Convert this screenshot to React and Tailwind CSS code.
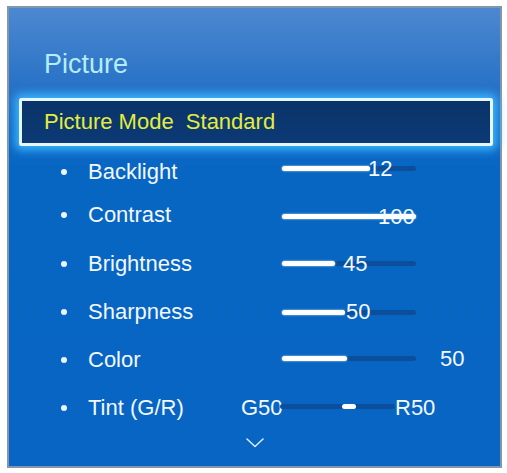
import React from 'react'

const TRACK_W = 134

// rows of the picture menu; fill/value in px from the track start
const rows = [
  { label: 'Backlight',  h: 'h-[36px]', shift: 'mb-[7px]', fill: 88,  value: '12',  valueX: 86 },
  { label: 'Contrast',   h: 'h-[49px]', shift: 'mt-[4px]', fill: 134, value: '100', valueX: 96 },
  { label: 'Brightness', h: 'h-[49px]', shift: '',         fill: 53,  value: '45',  valueX: 61 },
  { label: 'Sharpness',  h: 'h-[48px]', shift: '',         fill: 63,  value: '50',  valueX: 64 },
  { label: 'Color',      h: 'h-[48px]', shift: 'mb-[3px]', fill: 65,  value: '50',  valueX: 158 },
]

function Bullet() {
  return <span className="w-[6px] h-[6px] rounded-full bg-[#eef6ff] shrink-0" />
}

function Slider({ fill, value, valueX, shift }) {
  return (
    <div className={`relative h-[5px] rounded-full bg-[#0b4f9c] ${shift}`} style={{ width: TRACK_W }}>
      <div
        className="absolute left-0 top-0 h-full rounded-full bg-white shadow-[0_0_2px_#d8f2ff]"
        style={{ width: fill }}
      />
      <span
        className="absolute top-1/2 -translate-y-1/2 leading-none text-[22px] text-[#f4faff]"
        style={{ left: valueX }}
      >
        {value}
      </span>
    </div>
  )
}

export default function App() {
  return (
    <div
      className="w-[507px] h-[473px] bg-white pt-[6px] pl-[7px]"
      style={{ fontFamily: '"Liberation Sans", Arial, sans-serif' }}
    >
      <div className="w-[495px] h-[462px] border-2 border-[#8496ae] bg-[linear-gradient(180deg,#4c88d0_0px,#3a7dcb_40px,#2570c6_85px,#1268c4_120px,#0866c3_160px,#0865c3_100%)] flex flex-col">

        {/* título */}
        <div className="pt-[41px] pl-[35px] text-[27px] leading-[30px] text-[#b4ecf8]">
          Picture
        </div>

        {/* elemento seleccionado */}
        <div className="mt-[19px] ml-[10px] w-[474px] h-[48px] border-[3px] border-[#e6f7ff] rounded-[2px] bg-[linear-gradient(180deg,#0a3468,#0c3a76)] shadow-[0_0_10px_4px_#3ab8ff] pl-[22px] flex items-center">
          <span className="text-[22px] leading-[42px] text-[#e4ec3e] whitespace-pre">Picture Mode  Standard</span>
        </div>

        {/* filas */}
        <div className="mt-[8px] flex flex-col">
          {rows.map(r => (
            <div key={r.label} className={`${r.h} pl-[52px] flex items-center`}>
              <Bullet />
              <span className="ml-[21px] w-[194px] text-[22px] leading-[26px] text-[#f2f8ff]">{r.label}</span>
              <Slider fill={r.fill} value={r.value} valueX={r.valueX} shift={r.shift} />
            </div>
          ))}

          <div className="h-[48px] pl-[52px] flex items-center">
            <Bullet />
            <span className="ml-[21px] w-[153px] text-[22px] leading-[26px] text-[#f2f8ff]">Tint (G/R)</span>
            <span className="w-[39px] text-[22px] leading-[26px] text-[#f4faff]">G50</span>
            <div className="w-[115px] h-[5px] mb-[3px] rounded-full bg-[#0b4f9c] flex items-center justify-center">
              <span className="w-[14px] h-[5px] rounded-full bg-white ml-[23px]" />
            </div>
            <span className="text-[22px] leading-[26px] text-[#f4faff]">R50</span>
          </div>
        </div>

        <div className="mt-[6px] flex justify-center">
          <svg width="18" height="10" viewBox="0 0 18 10" fill="none">
            <polyline points="1,1 9,8.5 17,1" stroke="#d6ebff" strokeWidth="1.6" strokeLinecap="round" strokeLinejoin="round" />
          </svg>
        </div>
      </div>
    </div>
  )
}
